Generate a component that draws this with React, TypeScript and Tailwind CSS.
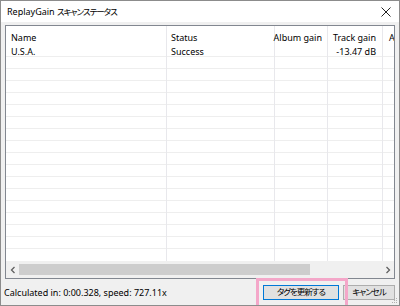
import React from 'react';

const FONT = { fontFamily: '"Noto Sans", "Noto Sans CJK JP", sans-serif' };

const ROWS = 17;

const columns = [
  { key: 'name', label: 'Name', width: 'w-[161px]', align: 'justify-start pl-[5px]' },
  { key: 'status', label: 'Status', width: 'w-[108px]', align: 'justify-start pl-[4px]' },
  { key: 'album', label: 'Album gain', width: 'w-[53px]', align: 'justify-end pr-[5px]' },
  { key: 'track', label: 'Track gain', width: 'w-[55px]', align: 'justify-end pr-[6px]' },
  { key: 'a', label: 'A', width: 'w-[30px]', align: 'justify-start pl-[6px]' },
];

const data: Record<string, string> = {
  name: 'U.S.A.',
  status: 'Success',
  album: '',
  track: '-13.47 dB',
  a: '',
};

// Japanese text in the dialog is set narrow, like Yu Gothic UI
const Jp: React.FC<{ children: React.ReactNode }> = ({ children }) => (
  <span className="[font-feature-settings:'palt'] text-[8.5px] leading-none tracking-[-1px]">{children}</span>
);

const Chevron: React.FC<{ dir: 'left' | 'right' }> = ({ dir }) => (
  <svg width="6" height="8" viewBox="0 0 6 8" className="shrink-0">
    <path
      d={dir === 'left' ? 'M4.5 1 L1.5 4 L4.5 7' : 'M1.5 1 L4.5 4 L1.5 7'}
      fill="none"
      stroke="#606060"
      strokeWidth="1.3"
    />
  </svg>
);

export default function App() {
  return (
    <div
      className="relative w-[400px] h-[306px] overflow-hidden border border-[#8c8c8c] bg-[#f0f0f0] text-[#000] flex flex-col"
      style={FONT}
    >
      {/* title bar */}
      <div className="h-[21px] shrink-0 bg-white flex items-center justify-between pl-[6px] pr-[8px]">
        <span className="text-[9px] leading-none whitespace-nowrap">
          ReplayGain <Jp>スキャンステータス</Jp>
        </span>
        <svg width="10" height="10" viewBox="0 0 10 10">
          <path d="M0.5 0.5 L9.5 9.5 M9.5 0.5 L0.5 9.5" stroke="#222" strokeWidth="1" />
        </svg>
      </div>

      {/* list view */}
      <div className="mt-[3px] mx-[4px] h-[254px] shrink-0 border border-[#828790] bg-white flex flex-col overflow-hidden">
        <div className="flex-1 flex overflow-hidden">
          {columns.map((col, ci) => (
            <div
              key={col.key}
              className={`${col.width} shrink-0 flex flex-col ${ci < columns.length - 1 ? 'border-r border-[#e8e8ec]' : ''}`}
            >
              <div className={`h-[19px] pt-[4px] flex items-center text-[9px] leading-none whitespace-nowrap ${col.align}`}>
                {col.label}
              </div>
              {Array.from({ length: ROWS }).map((_, ri) => (
                <div
                  key={ri}
                  className={`h-[12px] pt-[1px] border-b border-[#eeeeee] flex items-center text-[9px] leading-none whitespace-nowrap ${col.align}`}
                >
                  {ri === 0 ? data[col.key] : ''}
                </div>
              ))}
            </div>
          ))}
        </div>

        {/* horizontal scrollbar */}
        <div className="h-[17px] shrink-0 bg-[#f0f0f0] flex items-center">
          <div className="w-[13px] flex justify-center">
            <Chevron dir="left" />
          </div>
          <div className="flex-1 h-[11px] flex">
            <div className="w-[291px] h-full bg-[#cdcdcd]" />
          </div>
          <div className="w-[13px] flex justify-center">
            <Chevron dir="right" />
          </div>
        </div>
      </div>

      {/* status bar */}
      <div className="flex-1 flex items-center pl-[3px] pr-[4px]">
        <span className="text-[9px] leading-none whitespace-nowrap">Calculated in: 0:00.328, speed: 727.11x</span>
        <div className="ml-auto flex gap-[4px]">
          <button className="w-[76px] h-[15px] border border-[#0078d7] bg-[#e1e1e1] text-[8.5px] leading-none flex items-center justify-center">
            <Jp>タグを更新する</Jp>
          </button>
          <button className="w-[52px] h-[15px] border border-[#adadad] bg-[#e1e1e1] text-[8.5px] leading-none flex items-center justify-center">
            <Jp>キャンセル</Jp>
          </button>
        </div>
      </div>

      {/* annotation highlight */}
      <div className="absolute left-[255px] top-[277px] w-[92px] h-[32px] border-[3px] border-[#f4a7c9]" />

      {/* resize grip */}
      <svg className="absolute right-[1px] bottom-[1px]" width="8" height="8" viewBox="0 0 8 8">
        <rect x="6" y="2" width="1" height="1" fill="#b0b0b0" />
        <rect x="4" y="4" width="1" height="1" fill="#b0b0b0" />
        <rect x="6" y="4" width="1" height="1" fill="#b0b0b0" />
        <rect x="2" y="6" width="1" height="1" fill="#b0b0b0" />
        <rect x="4" y="6" width="1" height="1" fill="#b0b0b0" />
        <rect x="6" y="6" width="1" height="1" fill="#b0b0b0" />
      </svg>
    </div>
  );
}
